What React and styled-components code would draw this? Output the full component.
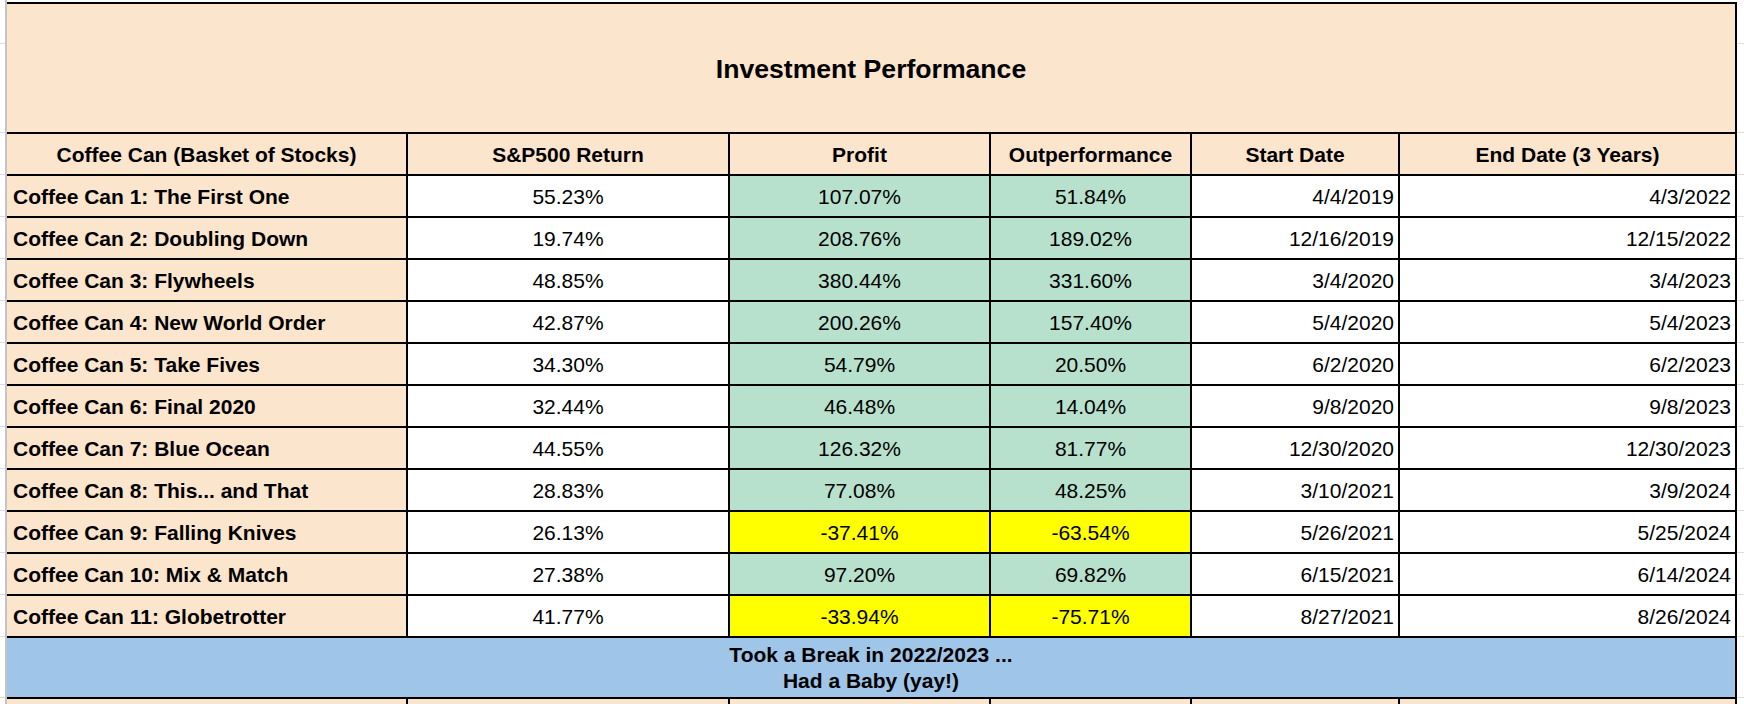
import React from 'react'
import styled, { createGlobalStyle } from 'styled-components'

const COLS = '401px 322px 261px 201px 208px 337px'

const rows = [
	['Coffee Can 1: The First One', '55.23%', '107.07%', '51.84%', '4/4/2019', '4/3/2022'],
	['Coffee Can 2: Doubling Down', '19.74%', '208.76%', '189.02%', '12/16/2019', '12/15/2022'],
	['Coffee Can 3: Flywheels', '48.85%', '380.44%', '331.60%', '3/4/2020', '3/4/2023'],
	['Coffee Can 4: New World Order', '42.87%', '200.26%', '157.40%', '5/4/2020', '5/4/2023'],
	['Coffee Can 5: Take Fives', '34.30%', '54.79%', '20.50%', '6/2/2020', '6/2/2023'],
	['Coffee Can 6: Final 2020', '32.44%', '46.48%', '14.04%', '9/8/2020', '9/8/2023'],
	['Coffee Can 7: Blue Ocean', '44.55%', '126.32%', '81.77%', '12/30/2020', '12/30/2023'],
	['Coffee Can 8: This... and That', '28.83%', '77.08%', '48.25%', '3/10/2021', '3/9/2024'],
	['Coffee Can 9: Falling Knives', '26.13%', '-37.41%', '-63.54%', '5/26/2021', '5/25/2024'],
	['Coffee Can 10: Mix & Match', '27.38%', '97.20%', '69.82%', '6/15/2021', '6/14/2024'],
	['Coffee Can 11: Globetrotter', '41.77%', '-33.94%', '-75.71%', '8/27/2021', '8/26/2024'],
]

const headers = [
	'Coffee Can (Basket of Stocks)',
	'S&P500 Return',
	'Profit',
	'Outperformance',
	'Start Date',
	'End Date (3 Years)',
]

// row heights of the sheet's own grid, seen in the gutters
const gutterRows = [44, 89, 42, 42, 42, 42, 42, 42, 42, 42, 42, 42, 42, 42, 61, 40]

const PEACH = '#fce5cd'
const GREEN = '#b7e1cd'
const YELLOW = '#ffff00'
const BLUE = '#9fc5e8'

const tint = (v) => (v.startsWith('-') ? YELLOW : GREEN)

export default function App() {
	return (
		<>
			<GlobalStyle />
			<Page>
				<Gutter $side="left">
					{gutterRows.map((h, i) => (
						<GutterCell key={`gl--${i}`} style={{ height: h }} />
					))}
				</Gutter>

				<Sheet>
					<TitleRow>Investment Performance</TitleRow>

					<Row>
						{headers.map((h) => (
							<Cell key={h} $bg={PEACH} $bold $align="center">
								{h}
							</Cell>
						))}
					</Row>

					{rows.map((r) => (
						<Row key={r[0]}>
							<Cell $bg={PEACH} $bold $align="left">
								{r[0]}
							</Cell>
							<Cell $align="center">{r[1]}</Cell>
							<Cell $bg={tint(r[2])} $align="center">
								{r[2]}
							</Cell>
							<Cell $bg={tint(r[3])} $align="center">
								{r[3]}
							</Cell>
							<Cell $align="right">{r[4]}</Cell>
							<Cell $align="right">{r[5]}</Cell>
						</Row>
					))}

					<BreakRow>
						Took a Break in 2022/2023 ...
						<br />
						Had a Baby (yay!)
					</BreakRow>

					<Row>
						{headers.map((h) => (
							<Cell key={`next--${h}`} $bg={PEACH} />
						))}
					</Row>
				</Sheet>

				<Gutter $side="right">
					{gutterRows.map((h, i) => (
						<GutterCell key={`gr--${i}`} style={{ height: h }} />
					))}
				</Gutter>
			</Page>
		</>
	)
}

const GlobalStyle = createGlobalStyle`
	html, body {
		margin: 0;
		padding: 0;
		background: #ffffff;
		overflow: hidden;
	}
	body {
		font-family: 'Liberation Sans', Arial, sans-serif;
		color: #000000;
	}
`

const Page = styled.div`
	display: flex;
	align-items: flex-start;
	width: 1744px;
	height: 704px;
	overflow: hidden;
`

const Gutter = styled.div`
	display: flex;
	flex-direction: column;
	width: 7px;
	height: 704px;
	flex-shrink: 0;
	box-sizing: border-box;
	border-right: ${(p) => (p.$side === 'left' ? '2px solid #c4c4c4' : 'none')};
`

const GutterCell = styled.div`
	flex-shrink: 0;
	box-sizing: border-box;
	border-bottom: 1px solid #dcdcdc;
`

const Sheet = styled.div`
	display: flex;
	flex-direction: column;
	width: 1730px;
	flex-shrink: 0;
	padding-top: 2px;
`

const TitleRow = styled.div`
	display: flex;
	align-items: center;
	justify-content: center;
	height: 132px;
	flex-shrink: 0;
	box-sizing: border-box;
	padding-top: 2px;
	background: ${PEACH};
	border-top: 2px solid #000;
	border-bottom: 2px solid #000;
	border-right: 2px solid #000;
	font-size: 26.6px;
	font-weight: 700;
`

const Row = styled.div`
	display: grid;
	grid-template-columns: ${COLS};
	height: 42px;
	flex-shrink: 0;
	box-sizing: border-box;
	border-bottom: 2px solid #000;
`

const Cell = styled.div`
	display: flex;
	align-items: center;
	justify-content: ${(p) =>
		p.$align === 'left' ? 'flex-start' : p.$align === 'right' ? 'flex-end' : 'center'};
	padding: ${(p) => (p.$align === 'left' ? '2px 0 0 6px' : p.$align === 'right' ? '2px 4px 0 0' : '2px 0 0 0')};
	box-sizing: border-box;
	background: ${(p) => p.$bg || '#ffffff'};
	border-right: 2px solid #000;
	font-size: 21px;
	font-weight: ${(p) => (p.$bold ? 700 : 400)};
	white-space: nowrap;
	overflow: hidden;
`

const BreakRow = styled.div`
	display: flex;
	align-items: center;
	justify-content: center;
	text-align: center;
	height: 61px;
	flex-shrink: 0;
	box-sizing: border-box;
	padding-top: 1px;
	background: ${BLUE};
	border-bottom: 2px solid #000;
	border-right: 2px solid #000;
	font-size: 21px;
	font-weight: 700;
	line-height: 26px;
`
